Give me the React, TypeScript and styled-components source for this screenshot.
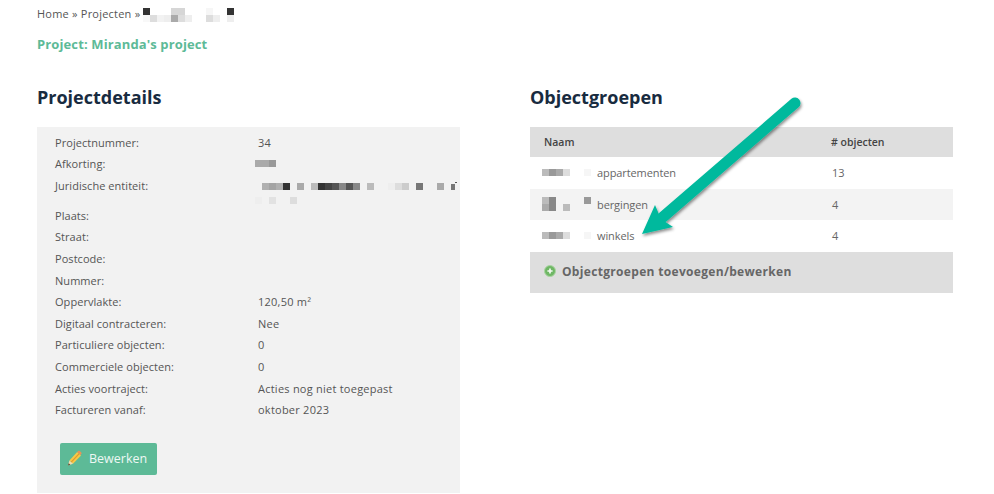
import React from 'react';
import styled, {createGlobalStyle} from "styled-components";

const GlobalStyle = createGlobalStyle`
    html, body {
        margin: 0;
        height: 100%;
        overflow: hidden;
        background: #fff;
        font-family: "Open Sans", "Liberation Sans", sans-serif;
    }
`;

type Cell = [number, number, string];

// blurred out names, cells are [col, row, colour] on a 7px raster
const Mosaic = ({cells, cols, rows, className, children}: {cells: Cell[]; cols: number; rows: number; className?: string; children?: React.ReactNode}) => (
    <svg className={className} width={cols * 7} height={rows * 7} viewBox={`0 0 ${cols * 7} ${rows * 7}`} shapeRendering="crispEdges">
        {cells.map(([c, r, fill]) => (
            <rect key={`${c}-${r}`} x={c * 7} y={r * 7} width="7" height="7" fill={fill}/>
        ))}
        {children}
    </svg>
);

const crumbCells: Cell[] = [
    [0, 0, "#333"], [4, 0, "#d6d6d6"], [5, 0, "#d6d6d6"], [9, 0, "#f6f6f6"], [12, 0, "#333"],
    [0, 1, "#f8f8f8"], [1, 1, "#ddd"], [2, 1, "#f2f2f2"], [3, 1, "#eee"], [4, 1, "#aaa"], [5, 1, "#ddd"], [6, 1, "#eee"],
    [9, 1, "#ddd"], [10, 1, "#eee"], [12, 1, "#eee"],
];

const shortCells: Cell[] = [[0, 0, "#aaa"], [1, 0, "#aaa"], [2, 0, "#999"]];

const entityCells: Cell[] = [
    [1, 0, "#b0b0b0"], [2, 0, "#a4a4a4"], [3, 0, "#b0b0b0"], [4, 0, "#333"], [6, 0, "#aaa"],
    [8, 0, "#bbb"], [9, 0, "#333"], [10, 0, "#444"], [11, 0, "#555"], [12, 0, "#888"], [13, 0, "#555"], [14, 0, "#888"],
    [16, 0, "#bbb"], [19, 0, "#eee"], [20, 0, "#ddd"], [21, 0, "#ccc"], [23, 0, "#777"], [26, 0, "#aaa"],
    [0, 2, "#eee"], [2, 2, "#e2e2e2"], [5, 2, "#ddd"],
];

const lineCells: Cell[] = [[0, 0, "#bbb"], [1, 0, "#999"], [2, 0, "#aaa"], [3, 0, "#ddd"], [6, 0, "#f6f6f6"]];

const blockCells: Cell[] = [
    [0, 0, "#bbb"], [1, 0, "#888"], [6, 0, "#999"],
    [0, 1, "#aaa"], [1, 1, "#888"], [3, 1, "#bbb"],
];

const details: {label: string; value?: string; tall?: boolean; cells?: Cell[]}[] = [
    {label: "Projectnummer:", value: "34"},
    {label: "Afkorting:", cells: shortCells},
    {label: "Juridische entiteit:", cells: entityCells, tall: true},
    {label: "Plaats:"},
    {label: "Straat:"},
    {label: "Postcode:"},
    {label: "Nummer:"},
    {label: "Oppervlakte:", value: "120,50 m²"},
    {label: "Digitaal contracteren:", value: "Nee"},
    {label: "Particuliere objecten:", value: "0"},
    {label: "Commerciele objecten:", value: "0"},
    {label: "Acties voortraject:", value: "Acties nog niet toegepast"},
    {label: "Factureren vanaf:", value: "oktober 2023"},
];

const groups = [
    {name: "appartementen", count: 13, cells: lineCells, tall: false},
    {name: "bergingen", count: 4, cells: blockCells, tall: true},
    {name: "winkels", count: 4, cells: lineCells, tall: false},
];

const PencilIcon = () => (
    <svg width="16" height="17" viewBox="0 0 16 17">
        <path d="M2.4 10.4 10.2 2l3.8 3.4-8 8.4z" fill="#f7c948"/>
        <path d="M4.2 12.2 12.2 3.7" stroke="#e09a2b" strokeWidth="1.2"/>
        <path d="M10.2 2l.9-.9c.5-.5 1.2-.5 1.7-.1l1.5 1.4c.4.5.4 1.2-.1 1.7l-.6.8z" fill="#e8925a"/>
        <path d="M2.4 10.4 1 15.6l5-1.8z" fill="#f0dcae"/>
        <path d="M1.6 13.2 1 15.6l2.4-.9z" fill="#5d4a32"/>
    </svg>
);

const PlusIcon = () => (
    <svg width="12" height="12" viewBox="0 0 12 12">
        <circle cx="6" cy="6" r="5.5" fill="#6fb765" stroke="#a8d3a0" strokeWidth="1"/>
        <path d="M6 3.4v5.2M3.4 6h5.2" stroke="#f4faf3" strokeWidth="1.7"/>
    </svg>
);

const Arrow = () => (
    <ArrowSvg width="180" height="150" viewBox="630 95 180 150">
        <defs>
            <filter id="arrowShadow" x="-20%" y="-20%" width="140%" height="140%">
                <feDropShadow dx="1" dy="2" stdDeviation="1.6" floodColor="#000" floodOpacity=".45"/>
            </filter>
        </defs>
        <g filter="url(#arrowShadow)" fill="#06b99d">
            <path d="M795 103 663 217" stroke="#06b99d" strokeWidth="11" strokeLinecap="round" fill="none"/>
            <path d="M642 234 655 205 661 219 673 227z" strokeLinejoin="round"/>
        </g>
    </ArrowSvg>
);

export default function App() {
    return (
        <Page>
            <GlobalStyle/>
            <Breadcrumb>
                <span>Home » Projecten »</span>
                <Mosaic cells={crumbCells} cols={13} rows={2}/>
            </Breadcrumb>
            <ProjectTitle>Project: Miranda's project</ProjectTitle>
            <Columns>
                <Column>
                    <Heading>Projectdetails</Heading>
                    <DetailsPanel>
                        {details.map((row) => (
                            <DetailRow key={row.label} $tall={row.tall}>
                                <span>{row.label}</span>
                                <DetailValue>
                                    {row.value}
                                    {row.cells && (
                                        <ValueMosaic cells={row.cells} cols={29} rows={row.tall ? 3 : 1} $tall={row.tall}>
                                            {row.tall && (
                                                <>
                                                    <rect x="196" y="1" width="4" height="6" fill="#777"/>
                                                    <rect x="200" y="-1" width="2" height="1" fill="#555"/>
                                                </>
                                            )}
                                        </ValueMosaic>
                                    )}
                                </DetailValue>
                            </DetailRow>
                        ))}
                        <EditButton>
                            <PencilIcon/>
                            Bewerken
                        </EditButton>
                    </DetailsPanel>
                </Column>
                <Column>
                    <Heading>Objectgroepen</Heading>
                    <TableHead>
                        <span>Naam</span>
                        <span># objecten</span>
                    </TableHead>
                    {groups.map((group, i) => (
                        <GroupRow key={group.name} $striped={i % 2 === 1}>
                            <GroupName>
                                <GroupMosaic cells={group.cells} cols={7} rows={group.tall ? 2 : 1}/>
                                {group.name}
                            </GroupName>
                            <span>{group.count}</span>
                        </GroupRow>
                    ))}
                    <TableFooter>
                        <PlusIcon/>
                        Objectgroepen toevoegen/bewerken
                    </TableFooter>
                </Column>
            </Columns>
            <Arrow/>
        </Page>
    );
}

const Page = styled.div`
    position: relative;
    height: 494px;
    padding: 0 41px 0 37px;
    box-sizing: border-box;
    color: #555;
    overflow: hidden;
`;

const Breadcrumb = styled.div`
    display: flex;
    align-items: flex-start;
    gap: 3px;
    height: 35px;
    padding-top: 8px;
    box-sizing: border-box;
    font-size: 11px;
    line-height: 12px;
    letter-spacing: .22px;
`;

const ProjectTitle = styled.h1`
    margin: 0;
    font-size: 13px;
    line-height: 18px;
    font-weight: 700;
    letter-spacing: .12px;
    color: #5dba97;
`;

const Columns = styled.div`
    display: grid;
    grid-template-columns: 423px 423px;
    gap: 70px;
    margin-top: 31px;
`;

const Column = styled.section`
    display: flex;
    flex-direction: column;
`;

const Heading = styled.h2`
    margin: 0 0 17px;
    font-size: 18px;
    line-height: 26px;
    font-weight: 700;
    color: #182b40;
`;

const DetailsPanel = styled.div`
    background: #f2f2f2;
    height: 366px;
    padding: 4.6px 0 0 18px;
    box-sizing: border-box;
`;

const DetailRow = styled.div<{$tall?: boolean}>`
    display: grid;
    grid-template-columns: 203px 1fr;
    height: ${(p) => (p.$tall ? "30px" : "21.6px")};
    font-size: 11px;
    line-height: 21.6px;
    letter-spacing: .05px;
`;

const DetailValue = styled.div`
    letter-spacing: .24px;
`;

const ValueMosaic = styled(Mosaic)<{$tall?: boolean}>`
    display: block;
    overflow: visible;
    margin: ${(p) => (p.$tall ? "8px 0 0 -3px" : "7px 0 0 -3px")};
`;

const EditButton = styled.button`
    display: flex;
    align-items: center;
    gap: 6px;
    width: 97px;
    height: 32px;
    margin: 22px 0 0 5px;
    padding: 0 0 0 7px;
    border: 0;
    border-radius: 2px;
    background: #5dba97;
    color: #eef8f4;
    font-family: inherit;
    font-size: 12.5px;
`;

const TableHead = styled.div`
    display: grid;
    grid-template-columns: 287px 1fr;
    align-items: center;
    height: 30px;
    padding-left: 14px;
    background: #dedede;
    color: #444;
    font-size: 10.5px;
    font-weight: 600;
`;

const GroupRow = styled.div<{$striped?: boolean}>`
    display: grid;
    grid-template-columns: 290px 1fr;
    align-items: center;
    height: 31.6px;
    padding-left: 12px;
    background: ${(p) => (p.$striped ? "#f3f3f3" : "#fff")};
    color: #666;
    font-size: 11px;
    letter-spacing: -.1px;
`;

const GroupName = styled.div`
    display: flex;
    align-items: center;
    gap: 6px;
`;

const GroupMosaic = styled(Mosaic)`
    display: block;
`;

const TableFooter = styled.div`
    display: flex;
    align-items: center;
    gap: 6px;
    height: 41px;
    padding: 0 0 2px 14px;
    box-sizing: border-box;
    background: #dedede;
    color: #666;
    font-size: 12px;
    font-weight: 700;
    letter-spacing: .32px;
`;

const ArrowSvg = styled.svg`
    position: absolute;
    left: 630px;
    top: 95px;
    overflow: visible;
`;
